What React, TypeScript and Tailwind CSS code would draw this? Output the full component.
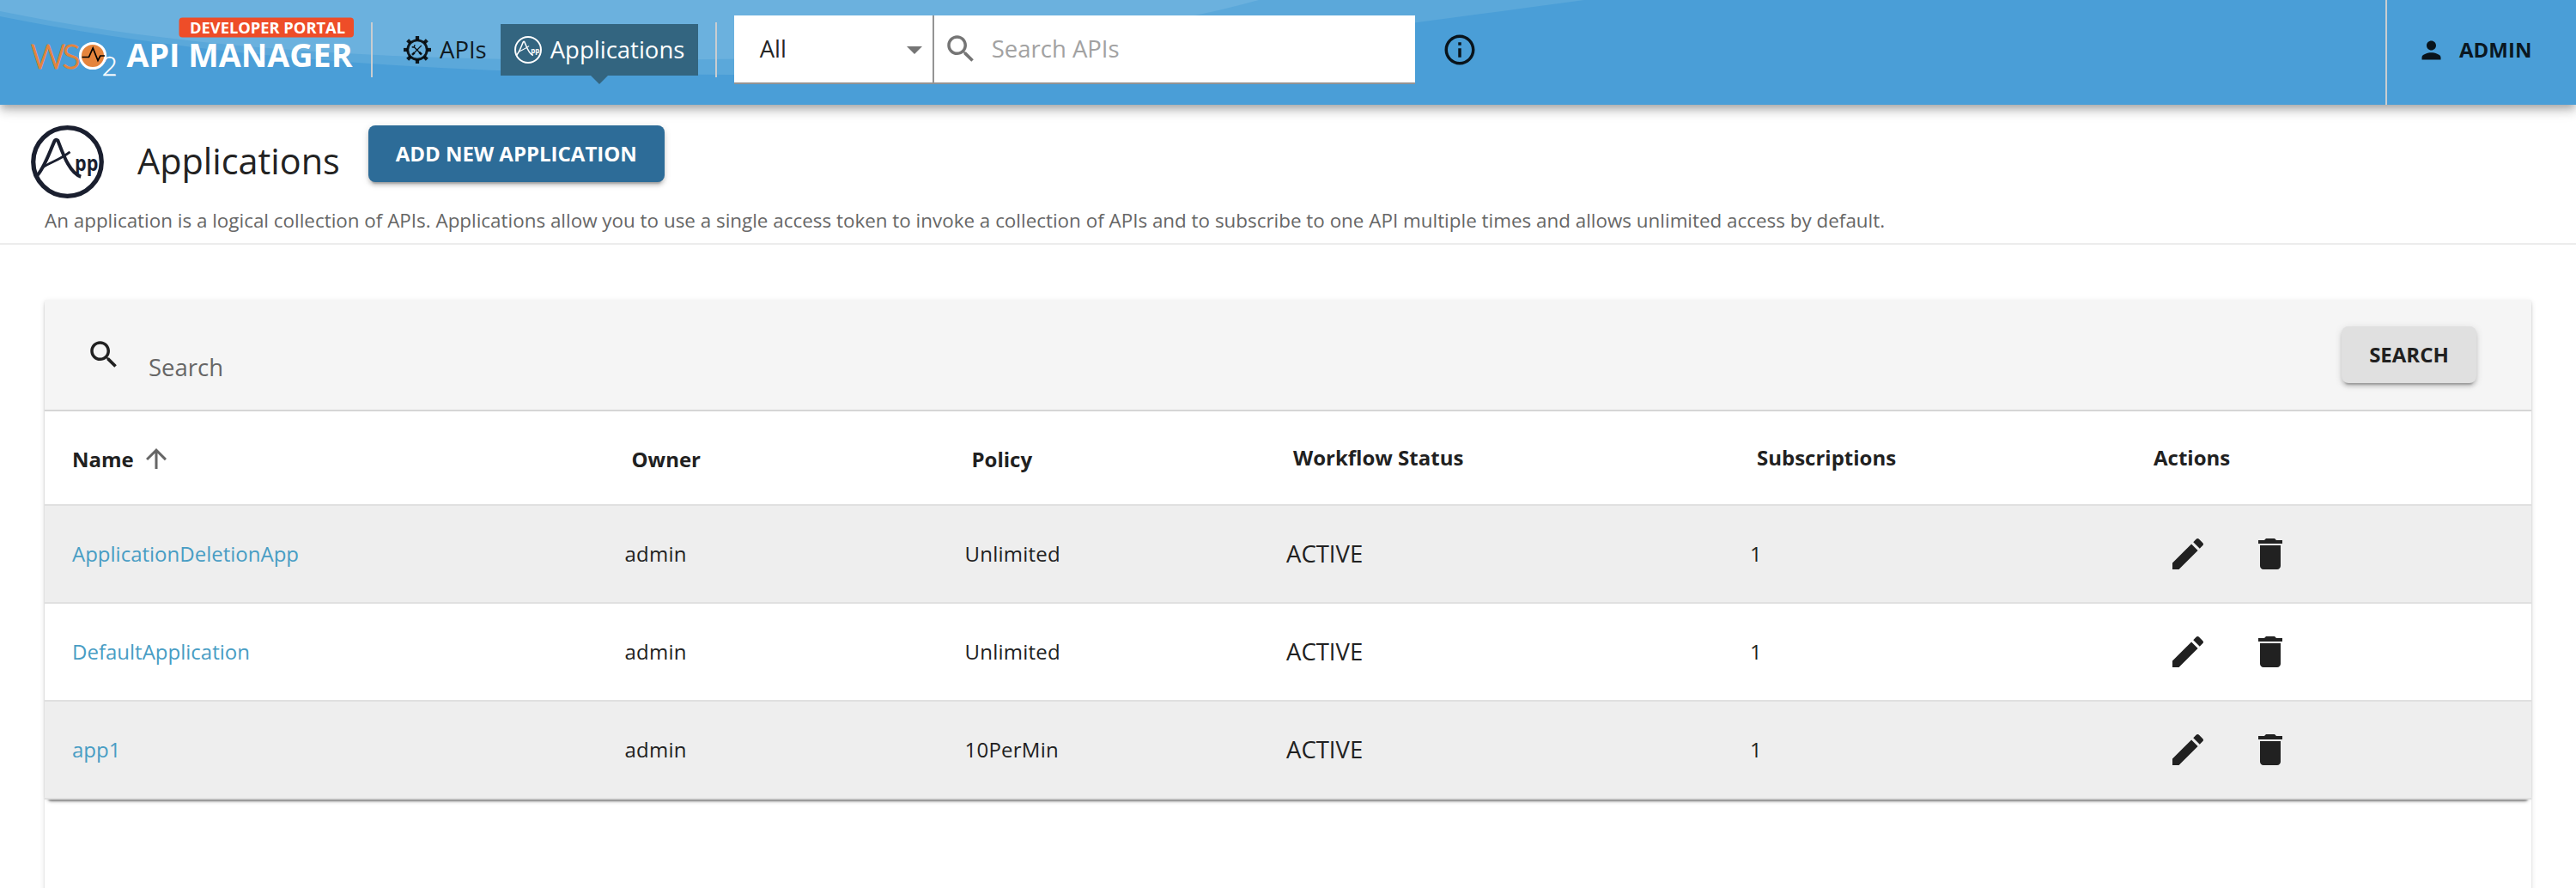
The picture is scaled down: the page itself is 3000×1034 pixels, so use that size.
import type { ReactNode } from "react";

type Application = {
  name: string;
  owner: string;
  policy: string;
  status: string;
  subscriptions: number;
};

const applications: Application[] = [
  { name: "ApplicationDeletionApp", owner: "admin", policy: "Unlimited", status: "ACTIVE", subscriptions: 1 },
  { name: "DefaultApplication", owner: "admin", policy: "Unlimited", status: "ACTIVE", subscriptions: 1 },
  { name: "app1", owner: "admin", policy: "10PerMin", status: "ACTIVE", subscriptions: 1 },
];

const columns = "grid grid-cols-[643.5px_396px_374.5px_540px_462px_1fr]";

function Icon({ className, children }: { className: string; children: ReactNode }) {
  return (
    <svg viewBox="0 0 24 24" fill="currentColor" className={`shrink-0 ${className}`}>
      {children}
    </svg>
  );
}

function SearchIcon({ className }: { className: string }) {
  return (
    <Icon className={className}>
      <path d="M15.5 14h-.79l-.28-.27C15.41 12.59 16 11.11 16 9.5 16 5.91 13.09 3 9.5 3S3 5.91 3 9.5 5.91 16 9.5 16c1.61 0 3.09-.59 4.23-1.57l.27.28v.79l5 4.99L20.49 19l-4.99-5zm-6 0C7.01 14 5 11.99 5 9.5S7.01 5 9.5 5 14 7.01 14 9.5 11.99 14 9.5 14z" />
    </Icon>
  );
}

function AppIcon({ className }: { className: string }) {
  return (
    <svg viewBox="0 0 84 84" fill="none" stroke="currentColor" className={`shrink-0 ${className}`}>
      <circle cx="42" cy="42" r="39.3" strokeWidth="5.2" />
      <path d="M5.500 59.500C15 51 22 29 27.500 17.500Q29 15.500 31 17.500C36 30 44 55 57.500 59" strokeWidth="4" />
      <path d="M14 48C24 42 34 39 45 30.500" strokeWidth="2.800" />
      <text
        x="50.500"
        y="52.500"
        fill="currentColor"
        stroke="none"
        textLength="27"
        lengthAdjust="spacingAndGlyphs"
        className="font-['Open_Sans'] text-[24px] font-bold"
      >
        pp
      </text>
    </svg>
  );
}

const teeth = [0, 45, 90, 135, 180, 225, 270, 315];

function GearIcon({ className }: { className: string }) {
  return (
    <svg viewBox="0 0 32 32" fill="none" stroke="currentColor" className={`shrink-0 ${className}`}>
      <circle cx="16" cy="16" r="11.2" strokeWidth="2.800" />
      {teeth.map((angle) => (
        <rect key={angle} x="13.900" y="0" width="4.200" height="4.500" fill="currentColor" stroke="none" transform={`rotate(${angle} 16 16)`} />
      ))}
      <path d="M12 12.500L20 20.500" strokeWidth="1.500" />
      <path d="M18.300 18.800L21 21.500" strokeWidth="2.600" />
      <path d="M20.800 11L11.500 20.500" strokeWidth="1.200" />
      <path d="M10 21.900L12.600 19.300" strokeWidth="2.600" />
      <path d="M9.800 12.300Q12.500 14.500 12.900 10.200" strokeWidth="1.600" />
    </svg>
  );
}

function Logo() {
  return (
    <svg viewBox="-10 0 390 80" className="-ml-2.5 h-[80px] w-[390px] shrink-0 overflow-visible font-['Open_Sans']">
      <rect x="172.500" y="6.500" width="203.500" height="23" rx="4" fill="#ee4d28" />
      <text x="185" y="24.800" fill="#fff" textLength="181" lengthAdjust="spacingAndGlyphs" className="text-[18.200px] font-bold">
        DEVELOPER PORTAL
      </text>
      <text x="111.500" y="64" fill="#fff" textLength="263" lengthAdjust="spacingAndGlyphs" className="text-[37.600px] font-bold">
        API MANAGER
      </text>
      <text x="0" y="65.500" fill="#e5843c" stroke="#e5843c" strokeWidth="1.200" textLength="40" lengthAdjust="spacingAndGlyphs" className="font-['Lato'] text-[40px] font-light">
        W
      </text>
      <text x="36.500" y="65.500" fill="#e5843c" stroke="#e5843c" strokeWidth="1.200" textLength="21" lengthAdjust="spacingAndGlyphs" className="font-['Lato'] text-[40px] font-light">
        S
      </text>
      <circle cx="72" cy="51" r="14.600" fill="#e5843c" stroke="#fff" strokeWidth="3" />
      <path d="M59.500 52.500H67.500L72.200 42L78 56.500L80.800 51H86" fill="none" stroke="#000" strokeWidth="1.700" />
      <text x="82.500" y="74" fill="#fff" stroke="#fff" strokeWidth="0.400" textLength="18" lengthAdjust="spacingAndGlyphs" className="font-['Lato'] text-[32px] font-light">
        2
      </text>
    </svg>
  );
}

function Header() {
  return (
    <header className="relative z-10 flex h-[122px] shrink-0 bg-[#4a9ed7] text-black/87 shadow-[0_4px_8px_-2px_rgba(0,0,0,0.2),0_8px_10px_0_rgba(0,0,0,0.14),0_2px_20px_0_rgba(0,0,0,0.12)]">
      <svg viewBox="0 0 3000 122" className="absolute inset-0 h-[122px] w-[3000px]">
        <path d="M0 0H1845C1560 38 1230 87 850 87C560 87 260 72 0 19Z" fill="#5ba8da" />
        <path d="M0 0H1466C1270 54 1010 70 720 70C440 70 210 56 0 13Z" fill="#6bb1de" />
      </svg>
      <div className="relative flex h-[116px] flex-1 items-center pl-9">
        <div className="-mt-2">
          <Logo />
        </div>
        <div className="ml-4 h-16 w-0.5 bg-[#c9cdd0]" />
        <a className="ml-9 flex items-center gap-2.5 text-[27.5px]">
          <GearIcon className="size-8" />
          APIs
        </a>
        <a className="relative ml-[16px] flex h-[60px] w-[230px] items-center gap-2.5 bg-[#336580] pl-4 text-[27.5px] text-white">
          <AppIcon className="size-8" />
          Applications
          <span className="absolute top-full left-1/2 size-0 -translate-x-1/2 border-x-10 border-t-10 border-x-transparent border-t-[#336580]" />
        </a>
        <div className="ml-5 h-16 w-0.5 bg-[#c9cdd0]" />
        <div className="ml-5 flex h-20 w-[793px] border-b-2 border-[#949494] bg-white">
          <div className="flex w-[233px] items-center justify-between border-r-2 border-[#949494] pr-3 pl-[30px] text-[27.5px]">
            All
            <svg viewBox="0 0 18 9" className="mt-0.5 h-[9px] w-[18px] text-[#757575]">
              <path d="M0 0H18L9 9Z" fill="currentColor" />
            </svg>
          </div>
          <div className="flex items-center pl-[10px] text-[27.5px] text-[#a2a2a2]">
            <SearchIcon className="size-[42px] text-[#757575]" />
            <span className="ml-[15px]">Search APIs</span>
          </div>
        </div>
        <Icon className="ml-[31px] size-[42px]">
          <path d="M11 7h2v2h-2zm0 4h2v6h-2zm1-9C6.480 2 2 6.480 2 12s4.480 10 10 10 10-4.480 10-10S17.520 2 12 2zm0 18c-4.410 0-8-3.590-8-8s3.590-8 8-8 8 3.590 8 8-3.590 8-8 8z" />
        </Icon>
      </div>
      <div className="relative flex w-[222px] border-l-2 border-[#c9cdd0] pl-[35px]">
        <div className="flex h-[116px] items-center text-2xl font-bold">
          <Icon className="size-[33px]">
            <path d="M12 12c2.210 0 4-1.790 4-4s-1.790-4-4-4-4 1.790-4 4 1.790 4 4 4zm0 2c-2.670 0-8 1.340-8 4v2h16v-2c0-2.660-5.330-4-8-4z" />
          </Icon>
          <span className="ml-4">ADMIN</span>
        </div>
      </div>
    </header>
  );
}

function TitleBar() {
  return (
    <section className="h-[163px] shrink-0 border-b-2 border-[#ececec] pt-6">
      <div className="flex h-[84px] items-center pl-9">
        <AppIcon className="size-[85px] text-[#1a1f2f]" />
        <h1 className="-mt-0.5 ml-[39px] text-[41.4px] text-[#222]">Applications</h1>
        <button className="ml-[33px] flex h-[66px] w-[345px] items-center justify-center self-start rounded-lg bg-[#2d6c98] text-2xl font-bold text-white shadow-[0_6px_2px_-4px_rgba(0,0,0,0.2),0_4px_4px_0_rgba(0,0,0,0.14),0_2px_10px_0_rgba(0,0,0,0.12)]">
          ADD NEW APPLICATION
        </button>
      </div>
      <p className="mt-[7px] pl-13 text-[22.42px] leading-10 text-[#666]">
        An application is a logical collection of APIs. Applications allow you to use a single access token to invoke a
        collection of APIs and to subscribe to one API multiple times and allows unlimited access by default.
      </p>
    </section>
  );
}

function ApplicationRow({ app }: { app: Application }) {
  return (
    <div className={`${columns} h-[114px] items-center border-b-2 border-[#e0e0e0] text-2xl tracking-[0.01em] odd:bg-[#eee]`}>
      <a className="pl-8 tracking-normal text-[#489dc4]">{app.name}</a>
      <span className="pl-8">{app.owner}</span>
      <span className="pl-8">{app.policy}</span>
      <span className="pl-8 text-[27.5px] tracking-normal">{app.status}</span>
      <span className="pl-8">{app.subscriptions}</span>
      <div className="flex gap-12 pl-14">
        <Icon className="size-12">
          <path d="M3 17.250V21h3.750L17.810 9.940l-3.750-3.750L3 17.250zM20.710 7.040c.39-.39.39-1.020 0-1.410l-2.340-2.340c-.39-.39-1.020-.39-1.410 0l-1.830 1.830 3.750 3.750 1.830-1.830z" />
        </Icon>
        <Icon className="size-12">
          <path d="M6 19c0 1.100.9 2 2 2h8c1.100 0 2-.9 2-2V7H6v12zM19 4h-3.500l-1-1h-5l-1 1H5v2h14V4z" />
        </Icon>
      </div>
    </div>
  );
}

function ApplicationTable() {
  return (
    <div className="rounded-b-lg text-[#212121] shadow-[0_6px_2px_-4px_rgba(0,0,0,0.3),0_4px_4px_-2px_rgba(0,0,0,0.3)]">
      <div className="flex h-[130px] items-center border-b-2 border-[#d6d6d6] bg-[#f5f5f5] pr-16 pl-12">
        <SearchIcon className="size-[42px]" />
        <span className="mt-[30px] ml-[31px] flex-1 text-[27.5px] text-[#666]">Search</span>
        <button className="flex h-[66px] w-[157px] items-center justify-center rounded-lg bg-[#e0e0e0] text-2xl font-bold shadow-[0_6px_2px_-4px_rgba(0,0,0,0.2),0_4px_4px_0_rgba(0,0,0,0.14),0_2px_10px_0_rgba(0,0,0,0.12)]">
          SEARCH
        </button>
      </div>
      <div className={`${columns} h-[110px] items-center border-b-2 border-[#e0e0e0] text-2xl font-bold`}>
        <span className="flex items-center pt-1 pl-8">
          Name
          <Icon className="-mt-0.5 ml-2 size-9 text-[#666]">
            <path d="M4 12l1.410 1.410L11 7.830V20h2V7.830l5.580 5.590L20 12l-8-8-8 8z" />
          </Icon>
        </span>
        <span className="pt-1 pl-10">Owner</span>
        <span className="pt-1 pl-10">Policy</span>
        <span className="pl-10">Workflow Status</span>
        <span className="pl-10">Subscriptions</span>
        <span className="pl-10">Actions</span>
      </div>
      <div>
        {applications.map((app) => (
          <ApplicationRow key={app.name} app={app} />
        ))}
      </div>
    </div>
  );
}

export default function App() {
  return (
    <div className="flex h-[1034px] w-[3000px] flex-col overflow-hidden bg-white font-['Open_Sans',sans-serif]">
      <Header />
      <TitleBar />
      <main className="mx-13 mt-16 h-[760px] shrink-0 bg-white shadow-[0_4px_2px_-2px_rgba(0,0,0,0.2),0_2px_2px_0_rgba(0,0,0,0.1),0_2px_6px_0_rgba(0,0,0,0.12)]">
        <ApplicationTable />
      </main>
    </div>
  );
}
